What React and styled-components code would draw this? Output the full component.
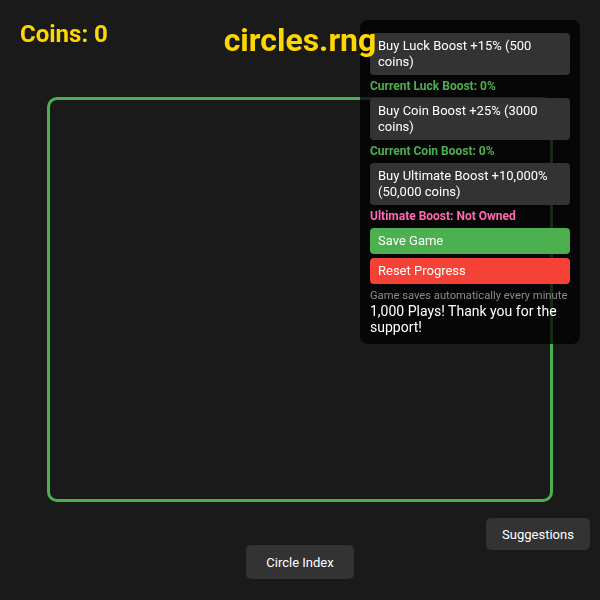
import React, { useState } from "react";
import styled, { createGlobalStyle } from "styled-components";

const GlobalStyle = createGlobalStyle`
  body {
    margin: 0;
    background: #1a1a1a;
    color: #fff;
    font-family: Roboto, "Liberation Sans", Arial, sans-serif;
  }
`;

const Page = styled.main`
  display: flex;
  flex-direction: column;
  align-items: center;
  min-height: 600px;
`;

const Coins = styled.div`
  position: fixed;
  top: 20px;
  left: 20px;
  font-size: 24px;
  font-weight: 700;
  line-height: 28px;
  color: #ffd700;
`;

const Title = styled.h1`
  position: relative;
  z-index: 2;
  margin: 21px 0 0;
  font-size: 32px;
  line-height: 38px;
  font-weight: 700;
  color: #ffd700;
`;

const Canvas = styled.div`
  margin-top: 38px;
  width: 500px;
  height: 399px;
  border: 3px solid #4caf50;
  border-radius: 10px;
`;

const GreyButton = styled.button`
  background: #333;
  color: #fff;
  border: none;
  border-radius: 5px;
  font-family: inherit;
  font-size: 13px;
  cursor: pointer;
`;

const IndexButton = styled(GreyButton)`
  margin-top: 43px;
  width: 108px;
  height: 34px;
`;

const SuggestButton = styled(GreyButton)`
  position: fixed;
  right: 10px;
  bottom: 50px;
  width: 104px;
  height: 32px;
`;

const Panel = styled.aside`
  position: fixed;
  top: 20px;
  right: 20px;
  z-index: 1;
  width: 220px;
  box-sizing: border-box;
  padding: 13px 10px 9px;
  display: flex;
  flex-direction: column;
  gap: 4px;
  background: rgba(0, 0, 0, 0.75);
  border-radius: 8px;
`;

const PanelButton = styled.button`
  padding: 5px 8px;
  border: none;
  border-radius: 4px;
  background: ${(p) => p.$bg || "#333"};
  color: #fff;
  font-family: inherit;
  font-size: 13px;
  line-height: 16px;
  text-align: left;
  cursor: pointer;
`;

const Status = styled.div`
  font-size: 12px;
  line-height: 15px;
  font-weight: 700;
  color: ${(p) => p.$color};
`;

const Footer = styled.div`
  display: flex;
  flex-direction: column;
`;

const Note = styled.div`
  font-size: 11.2px;
  line-height: 15px;
  white-space: nowrap;
  color: #8a8a8a;
`;

const Thanks = styled.div`
  font-size: 14px;
  line-height: 16px;
  color: #fff;
`;

const boosts = [
  { label: "Buy Luck Boost +15% (500 coins)", status: "Current Luck Boost: 0%", color: "#4caf50" },
  { label: "Buy Coin Boost +25% (3000 coins)", status: "Current Coin Boost: 0%", color: "#4caf50" },
  { label: "Buy Ultimate Boost +10,000% (50,000 coins)", status: "Ultimate Boost: Not Owned", color: "#ff69b4" },
];

export default function App() {
  const [coins] = useState(0);

  return (
    <>
      <GlobalStyle />
      <Page>
        <Coins>Coins: {coins}</Coins>
        <Title>circles.rng</Title>
        <Canvas />
        <IndexButton>Circle Index</IndexButton>
      </Page>

      <Panel>
        {boosts.map((b) => (
          <React.Fragment key={b.status}>
            <PanelButton>{b.label}</PanelButton>
            <Status $color={b.color}>{b.status}</Status>
          </React.Fragment>
        ))}
        <PanelButton $bg="#4caf50">Save Game</PanelButton>
        <PanelButton $bg="#f44336">Reset Progress</PanelButton>
        <Footer>
          <Note>Game saves automatically every minute</Note>
          <Thanks>1,000 Plays! Thank you for the support!</Thanks>
        </Footer>
      </Panel>

      <SuggestButton>Suggestions</SuggestButton>
    </>
  );
}
